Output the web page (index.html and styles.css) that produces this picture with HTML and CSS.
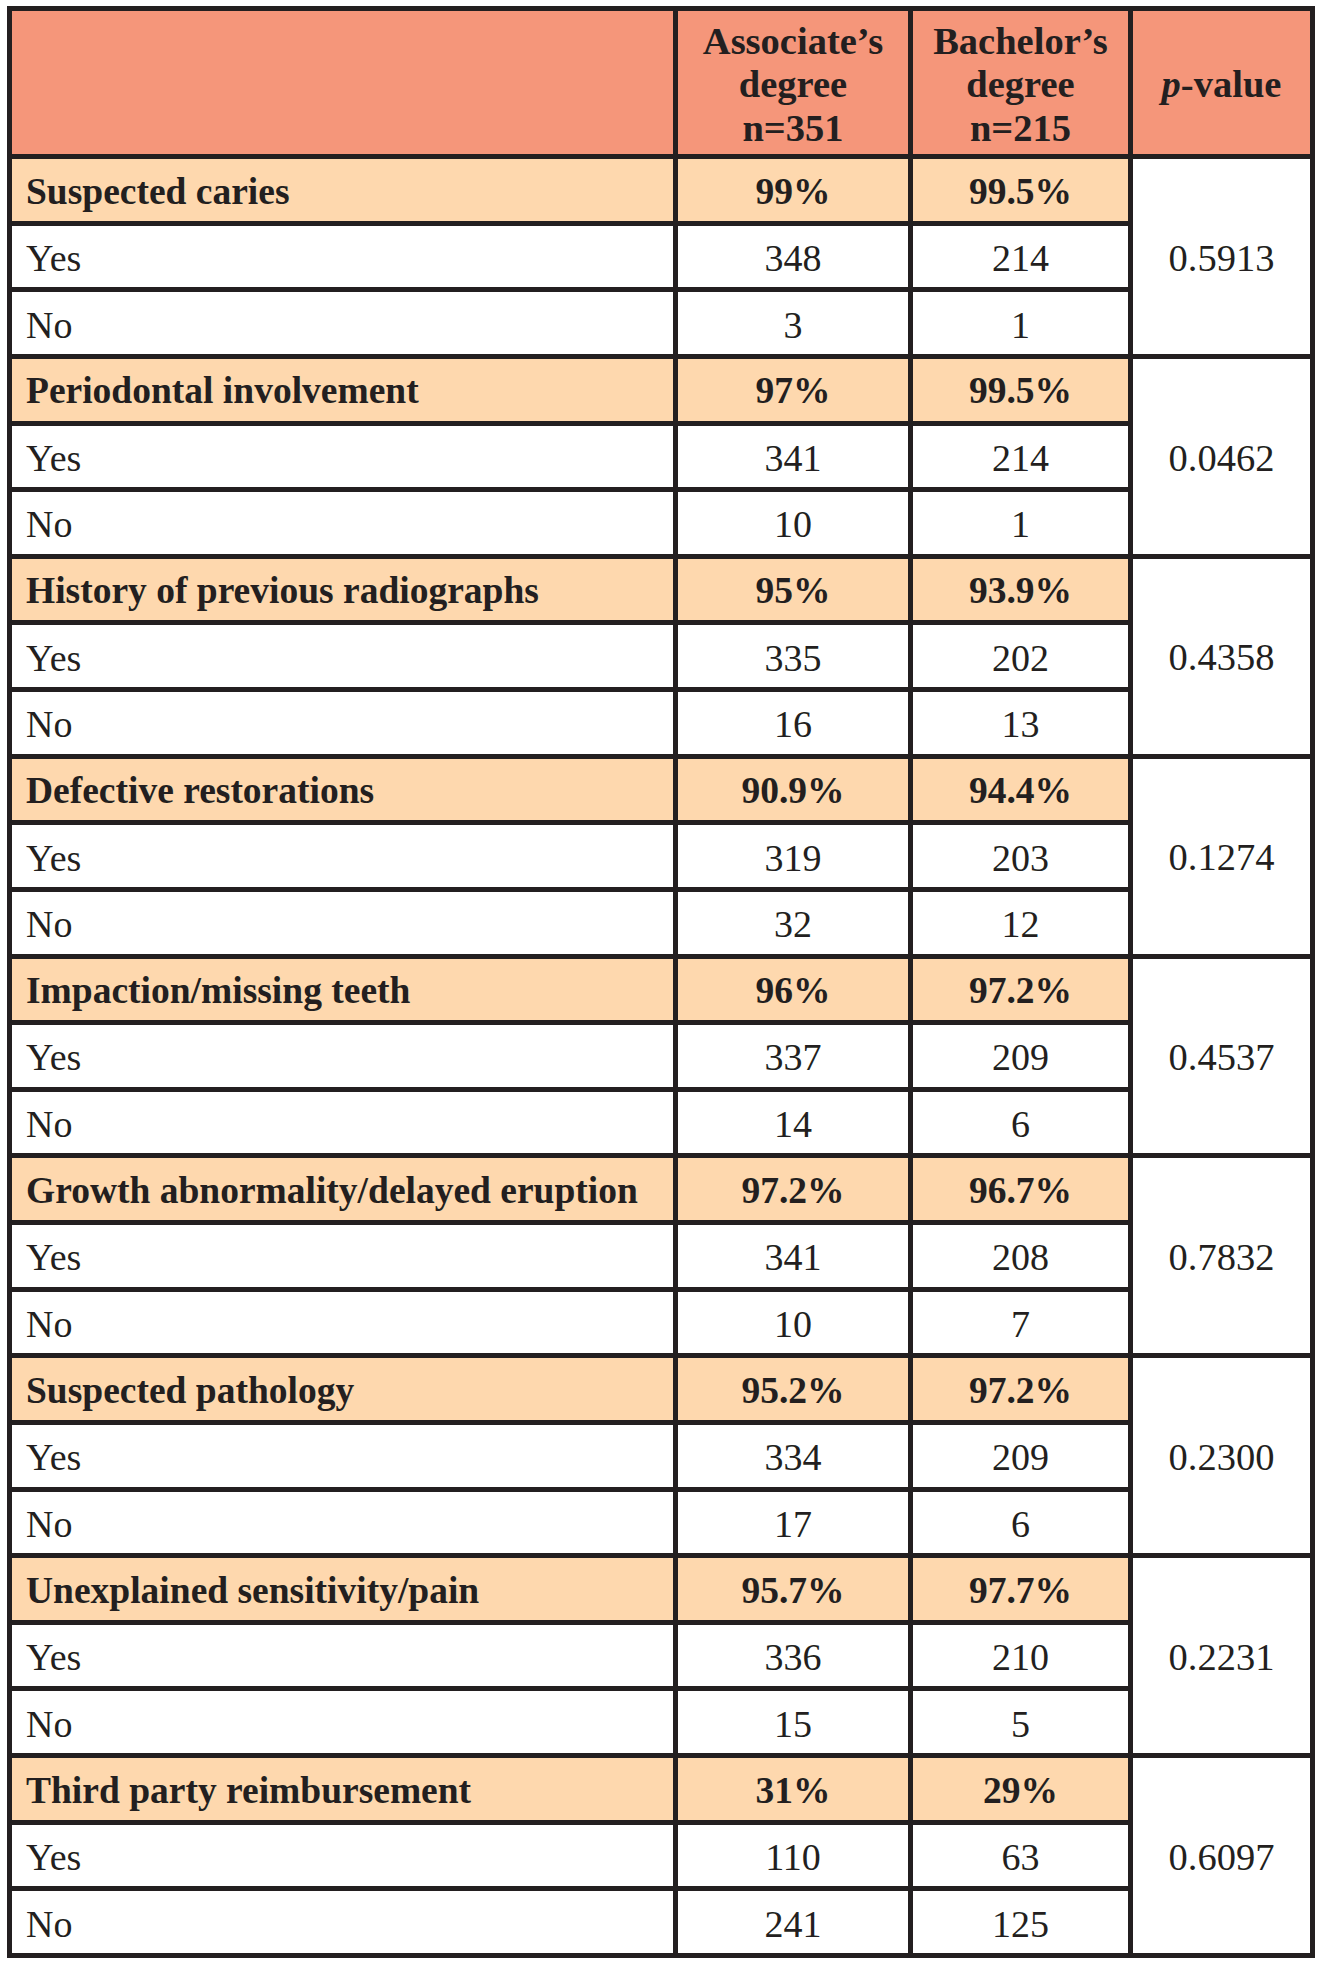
FILE: index.html
```html
<!DOCTYPE html>
<html lang="en">
<head>
<meta charset="utf-8">
<title>Table</title>
<link rel="stylesheet" href="styles.css">
</head>
<body>
<div class="table">
  <div class="cell head"></div>
  <div class="cell head center">Associate’s<br>degree<br>n=351</div>
  <div class="cell head center">Bachelor’s<br>degree<br>n=215</div>
  <div class="cell head center"><span><i>p</i>-value</span></div>

  <div class="cell cat">Suspected caries</div>
  <div class="cell cat center">99%</div>
  <div class="cell cat center">99.5%</div>
  <div class="cell pval">0.5913</div>
  <div class="cell lbl">Yes</div><div class="cell num">348</div><div class="cell num">214</div>
  <div class="cell lbl">No</div><div class="cell num">3</div><div class="cell num">1</div>

  <div class="cell cat">Periodontal involvement</div>
  <div class="cell cat center">97%</div>
  <div class="cell cat center">99.5%</div>
  <div class="cell pval">0.0462</div>
  <div class="cell lbl">Yes</div><div class="cell num">341</div><div class="cell num">214</div>
  <div class="cell lbl">No</div><div class="cell num">10</div><div class="cell num">1</div>

  <div class="cell cat">History of previous radiographs</div>
  <div class="cell cat center">95%</div>
  <div class="cell cat center">93.9%</div>
  <div class="cell pval">0.4358</div>
  <div class="cell lbl">Yes</div><div class="cell num">335</div><div class="cell num">202</div>
  <div class="cell lbl">No</div><div class="cell num">16</div><div class="cell num">13</div>

  <div class="cell cat">Defective restorations</div>
  <div class="cell cat center">90.9%</div>
  <div class="cell cat center">94.4%</div>
  <div class="cell pval">0.1274</div>
  <div class="cell lbl">Yes</div><div class="cell num">319</div><div class="cell num">203</div>
  <div class="cell lbl">No</div><div class="cell num">32</div><div class="cell num">12</div>

  <div class="cell cat">Impaction/missing teeth</div>
  <div class="cell cat center">96%</div>
  <div class="cell cat center">97.2%</div>
  <div class="cell pval">0.4537</div>
  <div class="cell lbl">Yes</div><div class="cell num">337</div><div class="cell num">209</div>
  <div class="cell lbl">No</div><div class="cell num">14</div><div class="cell num">6</div>

  <div class="cell cat">Growth abnormality/delayed eruption</div>
  <div class="cell cat center">97.2%</div>
  <div class="cell cat center">96.7%</div>
  <div class="cell pval">0.7832</div>
  <div class="cell lbl">Yes</div><div class="cell num">341</div><div class="cell num">208</div>
  <div class="cell lbl">No</div><div class="cell num">10</div><div class="cell num">7</div>

  <div class="cell cat">Suspected pathology</div>
  <div class="cell cat center">95.2%</div>
  <div class="cell cat center">97.2%</div>
  <div class="cell pval">0.2300</div>
  <div class="cell lbl">Yes</div><div class="cell num">334</div><div class="cell num">209</div>
  <div class="cell lbl">No</div><div class="cell num">17</div><div class="cell num">6</div>

  <div class="cell cat">Unexplained sensitivity/pain</div>
  <div class="cell cat center">95.7%</div>
  <div class="cell cat center">97.7%</div>
  <div class="cell pval">0.2231</div>
  <div class="cell lbl">Yes</div><div class="cell num">336</div><div class="cell num">210</div>
  <div class="cell lbl">No</div><div class="cell num">15</div><div class="cell num">5</div>

  <div class="cell cat">Third party reimbursement</div>
  <div class="cell cat center">31%</div>
  <div class="cell cat center">29%</div>
  <div class="cell pval">0.6097</div>
  <div class="cell lbl">Yes</div><div class="cell num">110</div><div class="cell num">63</div>
  <div class="cell lbl">No</div><div class="cell num">241</div><div class="cell num">125</div>
</div>
</body>
</html>
```

FILE: styles.css
```css
html, body {
  margin: 0;
  padding: 0;
  background: #ffffff;
}

body {
  padding: 6px 0 0 7px;
  font-family: "Liberation Serif", "DejaVu Serif", serif;
  color: #231f20;
}

.table {
  display: grid;
  grid-template-columns: 661px 230px 215px 177px;
  grid-template-rows: 143px;
  grid-auto-rows: 61.63px;
  gap: 5px;
  width: max-content;
  background: #231f20;
  border: 5px solid #231f20;
}

.cell {
  display: flex;
  align-items: center;
  background: #ffffff;
  font-size: 38px;
  line-height: 1;
  padding-top: 3px;
  box-sizing: border-box;
}

.head {
  background: #f5967a;
  font-weight: bold;
  font-size: 38.5px;
  line-height: 43.5px;
  padding-top: 5px;
}

.center {
  justify-content: center;
  text-align: center;
}

.cat {
  background: #fed8ae;
  font-weight: bold;
  font-size: 37.5px;
  padding-left: 14px;
}

.cat.center {
  padding-left: 0;
}

.lbl {
  padding-left: 14px;
}

.num {
  justify-content: center;
}

.pval {
  grid-row: span 3;
  justify-content: center;
  font-size: 38.5px;
}
```
